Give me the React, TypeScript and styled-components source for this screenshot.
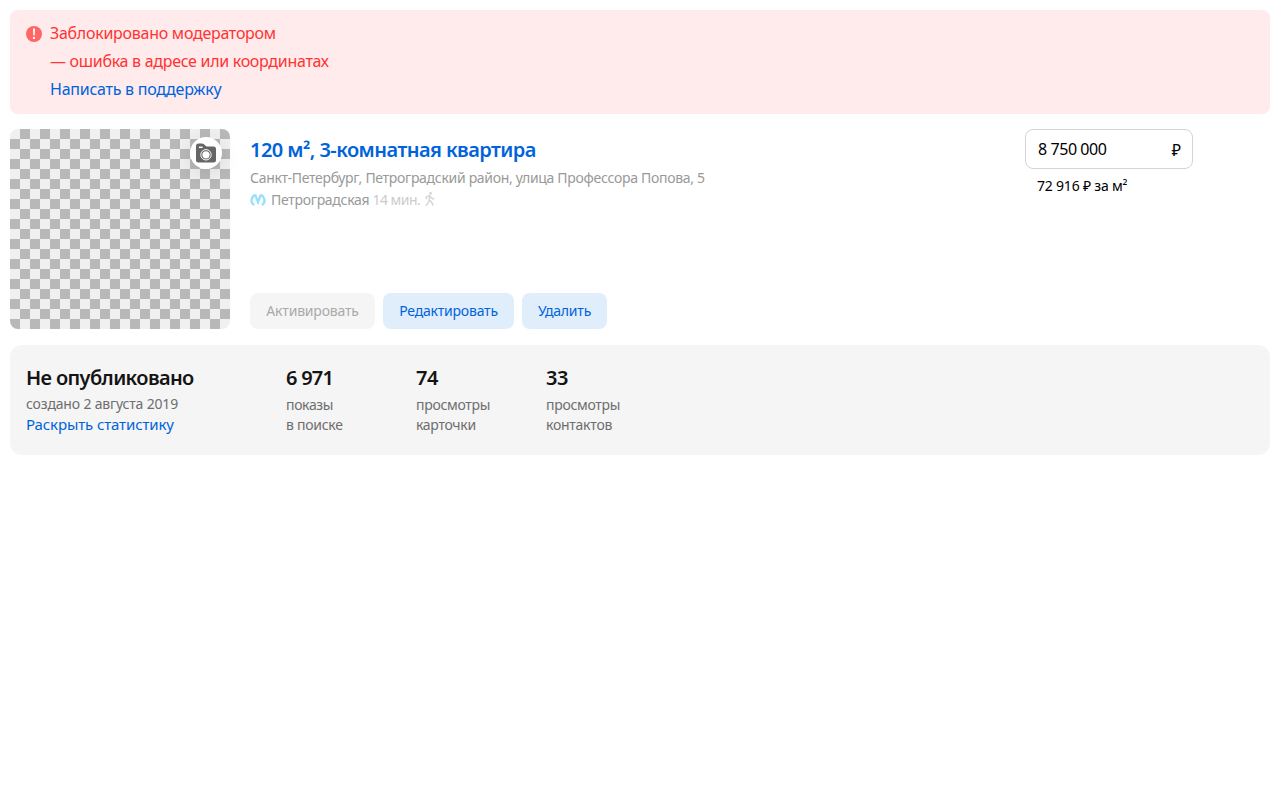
import React from "react";
import styled, { createGlobalStyle } from "styled-components";

const Global = createGlobalStyle`
  *, *::before, *::after { box-sizing: border-box; }
  body {
    margin: 0;
    background: #fff;
    color: #141414;
    font-family: "Noto Sans", "Open Sans", sans-serif;
  }
`;

const Page = styled.main`
  display: flex;
  flex-direction: column;
  padding: 10px;
`;

const Alert = styled.section`
  display: flex;
  gap: 8px;
  height: 104px;
  padding: 9px 16px;
  border-radius: 8px;
  background: #ffebeb;
`;

const AlertIcon = styled.svg`
  flex: none;
  width: 16px;
  height: 16px;
  margin-top: 7px;
`;

const Text = styled.span<{ $spacing?: number }>`
  letter-spacing: ${({ $spacing = 0 }) => $spacing}px;
  white-space: nowrap;
`;

const AlertLines = styled.div`
  display: flex;
  flex-direction: column;
  align-items: flex-start;
  font-size: 16px;
  line-height: 28px;
  color: #ff3333;
`;

const Link = styled.a<{ $spacing?: number }>`
  color: #0063db;
  letter-spacing: ${({ $spacing = 0 }) => $spacing}px;
  white-space: nowrap;
  text-decoration: none;
  cursor: pointer;
`;

const Offer = styled.article`
  display: flex;
  height: 200px;
  margin: 15px 0 16px;
`;

const Photo = styled.div`
  flex: none;
  display: flex;
  justify-content: flex-end;
  align-items: flex-start;
  width: 220px;
  height: 200px;
  padding: 8px;
  border-radius: 8px;
  background: conic-gradient(#b8b8b8 25%, #f0f0f0 0 50%, #b8b8b8 0 75%, #f0f0f0 0) 0 0 / 20px 20px;
`;

const PhotoButton = styled.button`
  display: flex;
  align-items: center;
  justify-content: center;
  width: 32px;
  height: 32px;
  padding: 0;
  border: 0;
  border-radius: 50%;
  background: #fff;
  box-shadow: 0 4px 20px rgba(0, 0, 0, 0.1);
`;

const Info = styled.div`
  display: flex;
  flex-direction: column;
  width: 795px;
  padding-left: 20px;
`;

const Title = styled.h3`
  margin: 7px 0 0;
  font-size: 20px;
  font-weight: 600;
  line-height: 28px;
`;

const Address = styled.div`
  margin-top: 4px;
  font-size: 14px;
  line-height: 20px;
  color: #999;
`;

const Metro = styled.div`
  display: flex;
  align-items: center;
  height: 20px;
  margin-top: 2px;
  font-size: 14px;
  line-height: 20px;
  color: #999;
`;

const MetroIcon = styled.svg`
  width: 16px;
  height: 12px;
  margin-right: 5px;
`;

const Walk = styled.span`
  display: flex;
  align-items: center;
  gap: 5px;
  margin-left: 3px;
  color: #ccc;
`;

const WalkIcon = styled.svg`
  width: 10px;
  height: 14px;
  margin-bottom: 2px;
`;

const Actions = styled.div`
  display: flex;
  gap: 8px;
  margin-top: auto;
`;

const Button = styled.button<{ $width: number }>`
  width: ${({ $width }) => $width}px;
  height: 36px;
  padding: 0;
  border: 0;
  border-radius: 8px;
  background: #e0edfb;
  color: #0063db;
  font: 14px/36px "Noto Sans", "Open Sans", sans-serif;
  text-align: center;

  &:disabled {
    background: #f5f5f5;
    color: #aaa;
  }
`;

const PriceColumn = styled.div`
  display: flex;
  flex-direction: column;
  width: 168px;
`;

const PriceField = styled.div`
  display: flex;
  align-items: center;
  justify-content: space-between;
  height: 40px;
  padding: 0 11px 0 12px;
  border: 1px solid #d4d4d4;
  border-radius: 8px;
  font-size: 16px;
  line-height: 20px;
  color: #000;
`;

const Currency = styled.span`
  padding-top: 1px;
`;

const PricePerMeter = styled.div`
  margin-top: 7px;
  padding-left: 12px;
  font-size: 14px;
  line-height: 20px;
  color: #000;
`;

const Stats = styled.section`
  display: flex;
  height: 110px;
  padding: 19px 16px;
  border-radius: 12px;
  background: #f5f5f5;
`;

const Status = styled.div`
  display: flex;
  flex-direction: column;
  align-items: flex-start;
  width: 260px;
  font-size: 14px;
  line-height: 20px;
  color: #6e6e6e;
`;

const Heading = styled.div<{ $spacing?: number }>`
  height: 28px;
  font-size: 20px;
  font-weight: 600;
  line-height: 28px;
  letter-spacing: ${({ $spacing = 0 }) => $spacing}px;
  white-space: nowrap;
  color: #141414;
`;

const Created = styled.div`
  margin-top: 2px;
`;

const Expand = styled.div`
  font-size: 15px;
`;

const Counter = styled.div`
  display: flex;
  flex-direction: column;
  width: 130px;
  font-size: 14px;
  line-height: 20px;
  color: #6e6e6e;
`;

const CounterLabel = styled.div`
  display: flex;
  flex-direction: column;
  margin-top: 3px;
`;

const counters = [
  { value: "6 971", spacing: -0.75, lines: [["показы", -0.35], ["в поиске", -0.28]] },
  { value: "74", spacing: -0.5, lines: [["просмотры", -0.3], ["карточки", -0.3]] },
  { value: "33", spacing: -0.5, lines: [["просмотры", -0.3], ["контактов", -0.25]] },
] as { value: string; spacing: number; lines: [string, number][] }[];

export default function App() {
  return (
    <>
      <Global />
      <Page>
        <Alert>
          <AlertIcon viewBox="0 0 16 16">
            <circle cx="8" cy="8" r="8" fill="#ff6666" />
            <path d="M7 2.500h2l-.3 7H7.300zM7 11h2v2H7z" fill="#fff" />
          </AlertIcon>
          <AlertLines>
            <Text $spacing={-0.27}>Заблокировано модератором</Text>
            <Text $spacing={-0.29}>— ошибка в адресе или координатах</Text>
            <Link $spacing={-0.25}>Написать в поддержку</Link>
          </AlertLines>
        </Alert>

        <Offer>
          <Photo>
            <PhotoButton aria-label="Фото">
              <svg width="20" height="20" viewBox="0 0 20 20">
                <path
                  d="M0 3Q0 .5 2.500 .5H6Q7.800 .5 8.800 2T11.500 3.500H17.500Q20 3.500 20 6V17Q20 19.500 17.500 19.500H2.500Q0 19.500 0 17z"
                  fill="#666"
                />
                <path d="M3 4.300h3.600" stroke="#fff" strokeWidth="1.500" />
                <circle cx="10" cy="11.800" r="5.200" fill="none" stroke="#fff" strokeWidth="1" />
                <circle cx="10" cy="11.800" r="3.600" fill="#fff" />
              </svg>
            </PhotoButton>
          </Photo>

          <Info>
            <Title>
              <Link $spacing={-0.55}>120 м², 3-комнатная квартира</Link>
            </Title>
            <Address>
              <Text $spacing={-0.3}>Санкт-Петербург, Петроградский район, улица Профессора Попова, 5</Text>
            </Address>
            <Metro>
              <MetroIcon viewBox="0 0 16 12" fill="none" stroke="#99e1fa" strokeWidth="2.400">
                <path d="M4.200 11C1.500 9.500.8 6.600 2.200 3.900 3.100 1.800 4.600.900 5.500 1.500L8 8l2.500-6.500c.9-.6 2.400.3 3.300 2.400 1.200 2.700.7 5.600-2 7.100" />
              </MetroIcon>
              <Text $spacing={-0.28}>Петроградская</Text>
              <Walk>
                <Text $spacing={-0.5}>14 мин.</Text>
                <WalkIcon viewBox="0 0 10 14" fill="none" stroke="#d6d6d6" strokeWidth="1.500">
                  <circle cx="5.600" cy="1.400" r="1.400" fill="#d6d6d6" stroke="none" />
                  <path d="M1.300 7.200V5.200l3.300-1.700L6.200 6l3 1.200M4.900 3.500 4.200 8l2.300 2L8.200 13.600M4.200 8l-.7 2.500L1 13.600" />
                </WalkIcon>
              </Walk>
            </Metro>
            <Actions>
              <Button $width={125} disabled>
                <Text $spacing={-0.2}>Активировать</Text>
              </Button>
              <Button $width={131}>
                <Text $spacing={-0.2}>Редактировать</Text>
              </Button>
              <Button $width={85}>
                <Text $spacing={-0.2}>Удалить</Text>
              </Button>
            </Actions>
          </Info>

          <PriceColumn>
            <PriceField>
              <Text $spacing={-0.43}>8 750 000</Text>
              <Currency>₽</Currency>
            </PriceField>
            <PricePerMeter>
              <Text $spacing={-0.2}>72 916 ₽ за м²</Text>
            </PricePerMeter>
          </PriceColumn>
        </Offer>

        <Stats>
          <Status>
            <Heading $spacing={-0.62}>Не опубликовано</Heading>
            <Created>
              <Text $spacing={-0.17}>создано 2 августа 2019</Text>
            </Created>
            <Expand>
              <Link $spacing={-0.12}>Раскрыть статистику</Link>
            </Expand>
          </Status>
          {counters.map(({ value, spacing, lines }) => (
            <Counter key={value}>
              <Heading $spacing={spacing}>{value}</Heading>
              <CounterLabel>
                {lines.map(([line, lineSpacing]) => (
                  <Text key={line} $spacing={lineSpacing}>
                    {line}
                  </Text>
                ))}
              </CounterLabel>
            </Counter>
          ))}
        </Stats>
      </Page>
    </>
  );
}
